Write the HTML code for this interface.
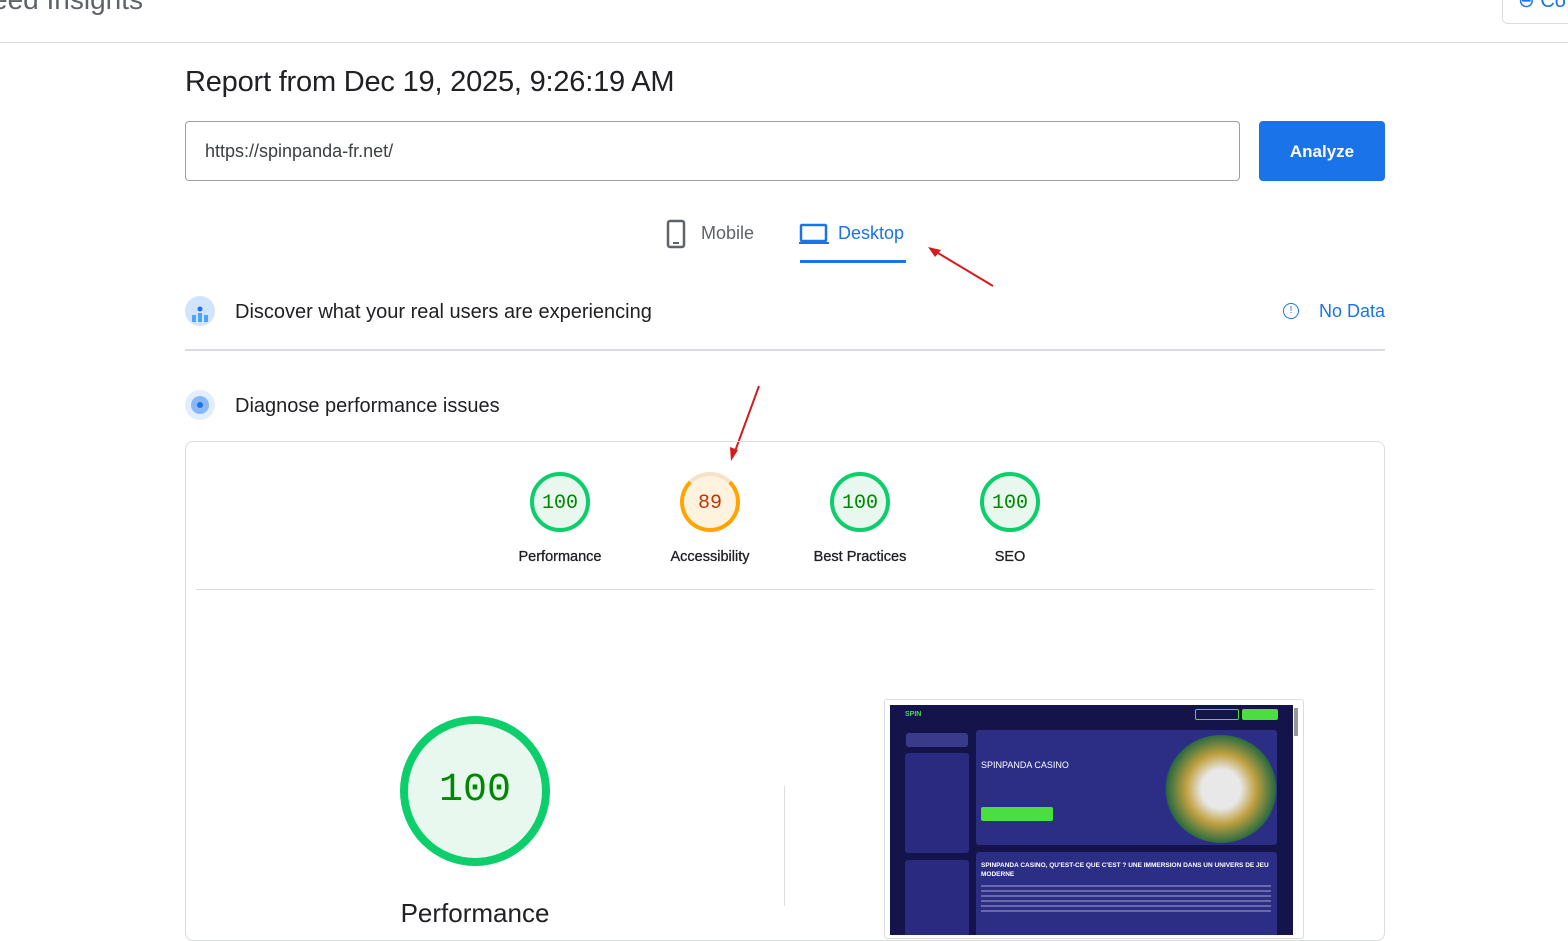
<!DOCTYPE html>
<html><head><meta charset="utf-8"><style>
*{box-sizing:border-box;margin:0;padding:0}
body{width:1568px;height:929px;overflow:hidden;background:#fff;font-family:"Liberation Sans",Arial,sans-serif;color:#202124;position:relative}
.abs{position:absolute}
.gauge{position:absolute;width:60px;height:60px;border-radius:50%;font-family:"Liberation Mono",monospace;font-size:20px;display:flex;align-items:center;justify-content:center;padding-top:2px}
.g{border:4px solid #0cce6b;background:#e8f8ef;color:#008800}
.lbl{position:absolute;font-size:14.5px;width:140px;text-align:center;color:#202124;-webkit-text-stroke:0.3px #202124}
</style></head><body>
<div class="abs" style="left:-8px;top:-16px;font-size:28px;color:#5f6368">eed Insights</div>
<div class="abs" style="left:1502px;top:-10px;width:80px;height:34px;border:1px solid #dadce0;border-radius:6px"></div>
<div class="abs" style="left:1518px;top:-12px;font-size:20px;color:#1a73e8">⊖ Co</div>
<div class="abs" style="left:0;top:42px;width:1568px;height:1px;background:#dadce0"></div>

<div class="abs" style="left:185px;top:66px;font-size:29px;color:#202124;letter-spacing:-0.2px">Report from Dec 19, 2025, 9:26:19 AM</div>
<div class="abs" style="left:185px;top:121px;width:1055px;height:60px;border:1px solid #9aa0a6;border-radius:4px;font-size:18px;padding:19px 19px;color:#3c4043">https://spinpanda-fr.net/</div>
<div class="abs" style="left:1259px;top:121px;width:126px;height:60px;background:#1a73e8;border-radius:4px;color:#fff;font-size:17px;font-weight:bold;text-align:center;line-height:61px">Analyze</div>

<svg class="abs" style="left:666px;top:219px" width="20" height="30"><rect x="2" y="2" width="16" height="26" rx="2" fill="none" stroke="#5f6368" stroke-width="2.5"/><line x1="7" y1="24" x2="13" y2="24" stroke="#5f6368" stroke-width="2"/></svg>
<div class="abs" style="left:701px;top:223px;font-size:18px;color:#5f6368">Mobile</div>
<svg class="abs" style="left:799px;top:223px" width="30" height="22"><rect x="2" y="2" width="25" height="16" rx="1" fill="none" stroke="#1a73e8" stroke-width="2.5"/><line x1="0" y1="20" x2="30" y2="20" stroke="#1a73e8" stroke-width="2"/></svg>
<div class="abs" style="left:838px;top:223px;font-size:18px;color:#1a73e8">Desktop</div>
<div class="abs" style="left:800px;top:260px;width:106px;height:3px;background:#1a73e8"></div>
<svg class="abs" style="left:925px;top:244px" width="72" height="46"><line x1="68" y1="42" x2="8" y2="6" stroke="#d41c1c" stroke-width="2"/><polygon points="3,3 16,6 10,13" fill="#d41c1c"/></svg>

<div class="abs" style="left:185px;top:296px;width:30px;height:30px;border-radius:50%;background:#d2e3fc"></div>
<svg class="abs" style="left:185px;top:296px" width="30" height="30"><circle cx="15" cy="13" r="2.5" fill="#1a73e8"/><rect x="13" y="17" width="4" height="9" fill="#4fa3f7"/><rect x="7" y="19" width="4" height="7" fill="#4fa3f7"/><rect x="19" y="19" width="4" height="7" fill="#4fa3f7"/></svg>
<div class="abs" style="left:235px;top:301px;font-size:20px">Discover what your real users are experiencing</div>
<div class="abs" style="left:1283px;top:303px;width:16px;height:16px;border:1.5px solid #1a73e8;border-radius:50%;font-size:10px;color:#1a73e8;text-align:center;line-height:13px">!</div>
<div class="abs" style="left:1319px;top:301px;font-size:18px;color:#1a73e8">No Data</div>
<div class="abs" style="left:185px;top:349px;width:1200px;height:2px;background:#dadce0"></div>

<div class="abs" style="left:185px;top:390px;width:30px;height:30px;border-radius:50%;background:#e3eefd"></div>
<div class="abs" style="left:191px;top:396px;width:18px;height:18px;border-radius:50%;background:#8ab8f5"></div>
<div class="abs" style="left:197px;top:402px;width:6px;height:6px;border-radius:50%;background:#1a73e8"></div>
<div class="abs" style="left:235px;top:395px;font-size:20px">Diagnose performance issues</div>
<svg class="abs" style="left:726px;top:384px" width="40" height="80"><line x1="33" y1="2" x2="8" y2="70" stroke="#d41c1c" stroke-width="2"/><polygon points="5,77 4,63 12,66" fill="#d41c1c"/></svg>

<div class="abs" style="left:185px;top:441px;width:1200px;height:500px;border:1px solid #dadce0;border-radius:8px"></div>
<div class="gauge g" style="left:530px;top:472px">100</div>
<div class="gauge" style="left:680px;top:472px;border:4px solid #ffa400;background:#fff3e0;color:#c33300;border-top-color:#f6e2c4">89</div>
<div class="gauge g" style="left:830px;top:472px">100</div>
<div class="gauge g" style="left:980px;top:472px">100</div>
<div class="lbl" style="left:490px;top:549px">Performance</div>
<div class="lbl" style="left:640px;top:549px">Accessibility</div>
<div class="lbl" style="left:790px;top:549px">Best Practices</div>
<div class="lbl" style="left:940px;top:549px">SEO</div>
<div class="abs" style="left:196px;top:589px;width:1178px;height:1px;background:#dadce0"></div>

<div class="abs" style="left:400px;top:716px;width:150px;height:150px;border-radius:50%;border:8px solid #0cce6b;background:#e8f8ef;color:#008800;font-family:'Liberation Mono',monospace;font-size:40px;text-align:center;line-height:134px">100</div>
<div class="abs" style="left:375px;top:898px;width:200px;text-align:center;font-size:26px;color:#202124">Performance</div>
<div class="abs" style="left:784px;top:786px;width:1px;height:120px;background:#dadce0"></div>

<div class="abs" style="left:884px;top:699px;width:420px;height:240px;border:1px solid #dadce0;border-radius:3px;background:#fff"></div>
<div class="abs" style="left:890px;top:705px;width:403px;height:230px;background:#14144a;overflow:hidden">
 <div class="abs" style="left:15px;top:6px;font-size:7px;font-weight:bold;color:#4ade40">SPIN</div>
 <div class="abs" style="left:305px;top:4px;width:44px;height:11px;border:1px solid #4ade40;border-radius:2px"></div>
 <div class="abs" style="left:352px;top:4px;width:36px;height:11px;background:#4ade40;border-radius:2px"></div>
 <div class="abs" style="left:16px;top:28px;width:62px;height:14px;background:#3a3a8a;border-radius:3px"></div>
 <div class="abs" style="left:15px;top:48px;width:64px;height:100px;background:#2a2a80;border-radius:3px"></div>
 <div class="abs" style="left:15px;top:155px;width:64px;height:80px;background:#2a2a80;border-radius:3px"></div>
 <div class="abs" style="left:86px;top:25px;width:301px;height:115px;background:#2c2e86;border-radius:3px"></div>
 <div class="abs" style="left:91px;top:55px;font-size:9px;color:#fff">SPINPANDA CASINO</div>
 <div class="abs" style="left:91px;top:102px;width:72px;height:14px;background:#4ade40;border-radius:2px"></div>
 <div class="abs" style="left:275px;top:30px;width:112px;height:108px;border-radius:50%;background:radial-gradient(circle,#e8e8e8 0 25%,#c0a040 45%,#2a6a40 70%,#2c2e86 72%)"></div>
 <div class="abs" style="left:86px;top:147px;width:301px;height:90px;background:#2c2e86;border-radius:3px"></div>
 <div class="abs" style="left:91px;top:156px;font-size:6.5px;font-weight:bold;color:#fff;width:290px;line-height:9px">SPINPANDA CASINO, QU'EST-CE QUE C'EST ? UNE IMMERSION DANS UN UNIVERS DE JEU MODERNE</div>
 <div class="abs" style="left:91px;top:180px;width:290px;height:30px;background:repeating-linear-gradient(#6a6aa8 0 2px,transparent 2px 5px)"></div>
</div>
<div class="abs" style="left:1294px;top:708px;width:4px;height:28px;background:#999"></div>
</body></html>
